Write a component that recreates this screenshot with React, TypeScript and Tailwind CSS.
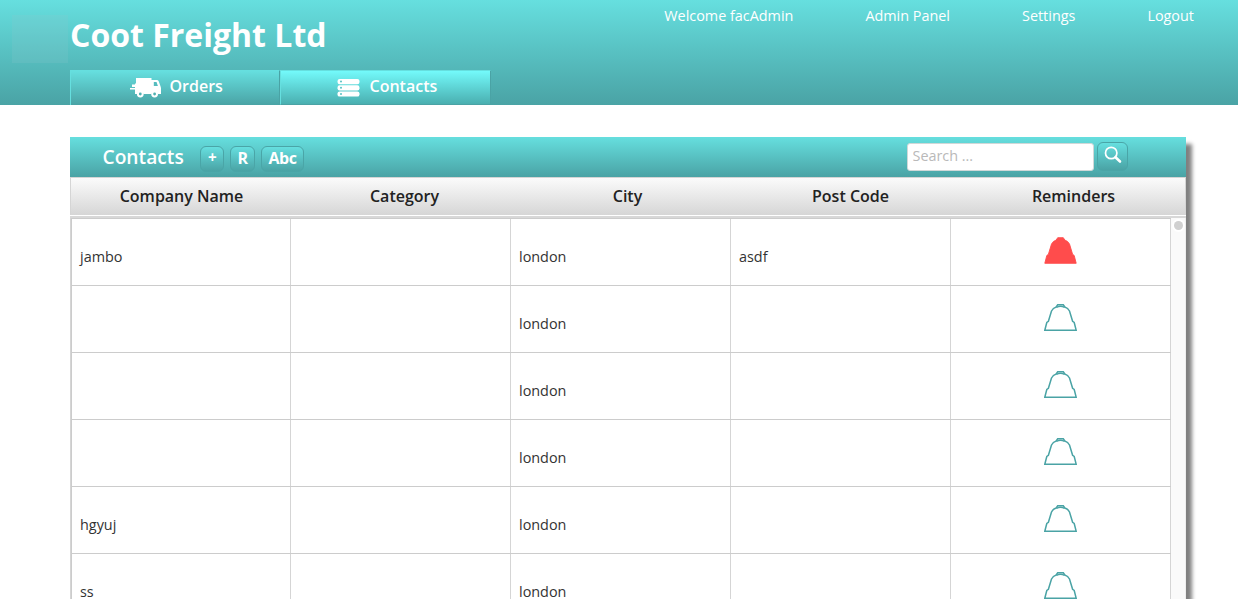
import React from "react";

const rows = [
  { name: "jambo", category: "", city: "london", post: "asdf", due: true },
  { name: "", category: "", city: "london", post: "", due: false },
  { name: "", category: "", city: "london", post: "", due: false },
  { name: "", category: "", city: "london", post: "", due: false },
  { name: "hgyuj", category: "", city: "london", post: "", due: false },
  { name: "ss", category: "", city: "london", post: "", due: false },
];

const columns = ["Company Name", "Category", "City", "Post Code", "Reminders"];

function Truck() {
  return (
    <svg width="31" height="20" viewBox="0 0 31 20" fill="none" className="shrink-0">
      <path
        fill="#fff"
        d="M6 0H21.500V2H27q1 0 1.600 1l2 5.500.4 1.500v6H28a4 4 0 0 0-6.800 0H13.700a4 4 0 0 0-6.800 0H5V11.500H0V10H5V9H2V6.500H5V5.500H6z"
      />
      <path fill="#56bcbe" d="M23.800 4h2.700l1.400 4h-4.100z" />
      <circle cx="10.300" cy="16" r="2.400" stroke="#fff" strokeWidth="2" fill="#50b0b1" />
      <circle cx="24.600" cy="16" r="2.400" stroke="#fff" strokeWidth="2" fill="#50b0b1" />
    </svg>
  );
}

function Stack() {
  return (
    <svg width="23" height="18" viewBox="0 0 23 18" className="shrink-0">
      {[0, 6.2, 12.4].map((y) => (
        <g key={y}>
          <rect x="0.500" y={y} width="22" height="5.200" rx="2.200" fill="#fff" />
          <circle cx="4" cy={y + 2.6} r="1" fill="#56c0c2" />
        </g>
      ))}
    </svg>
  );
}

function Bell({ due }: { due: boolean }) {
  return (
    <svg width="33" height="30" viewBox="0.5 0 33 30" className="block">
      <path
        d="M1.300 27.300 3.300 19.500 4.900 18.300 8 8Q9.500 5 12.700 4L14.200 1.700H19.800L21.300 4Q24.500 5 26 8L29.100 18.300 30.700 19.500 32.700 27.300Z"
        fill={due ? "#ff4c4c" : "#fff"}
        stroke={due ? "#ff4c4c" : "#4aa3a5"}
        strokeWidth={due ? 0.9 : 1.5}
      />
      {!due && <path d="M13 4.300Q17 2.300 21 4.300" fill="none" stroke="#4aa3a5" strokeWidth="1.500" />}
    </svg>
  );
}

const button =
  "box-border flex items-center justify-center rounded-[6px] border border-[#4aa5a7] bg-linear-to-b from-[#66dfdf] to-[#4aa3a5] text-white leading-none";

export default function App() {
  return (
    <div className="min-h-[599px] w-full bg-white font-['Open_Sans',sans-serif] text-[14.4px] text-[#333]">
      <header className="flex h-[105px] bg-linear-to-b from-[#66dfdf] to-[#4aa3a5] text-white">
        <div className="w-[70px] pt-[15px] pl-3">
          <div className="h-12 w-14 bg-[#8cc8cc]/20" />
        </div>
        <div className="flex w-[421px] flex-col justify-between">
          <h1 className="pt-[11px] text-[32px] leading-[48px] font-bold">Coot Freight Ltd</h1>
          <nav className="flex h-[35px] text-[16px] font-semibold">
            <a className="flex w-[210px] items-start border-t border-r border-l border-t-[#66dfdf] border-r-[#4aa3a5] border-l-[#66dfdf] bg-linear-to-b from-[#66dfdf] to-[#4aa3a5] pl-[59px]">
              <span className="pt-[7px]"><Truck /></span>
              <span className="ml-[8.5px] pt-[3px] leading-6">Orders</span>
            </a>
            <a className="flex w-[211px] items-start border border-t-[#66dfdf] border-r-[#4aa3a5] border-b-[#4aa3a5] border-l-[#66dfdf] bg-linear-to-b from-[#73fafb] to-[#4aafb0] pl-[56px]">
              <span className="pt-[8px]"><Stack /></span>
              <span className="ml-[9.5px] pt-[3px] leading-6">Contacts</span>
            </a>
          </nav>
        </div>
        <div className="flex flex-1 justify-end gap-[72px] pt-[5px] pr-[44px] leading-[21px]">
          <a>Welcome facAdmin</a>
          <a>Admin Panel</a>
          <a>Settings</a>
          <a>Logout</a>
        </div>
      </header>

      <div className="h-[494px] overflow-hidden pt-8 pl-[70px]">
        <main className="h-[600px] w-[1116px] bg-white shadow-[6px_7px_4px_#808080]">
          <div className="flex h-10 items-start bg-linear-to-b from-[#66dfdf] to-[#4aa3a5] pl-[32.500px] text-white">
            <h2 className="w-[97.500px] pt-[5px] text-[19.2px] leading-[30px] font-semibold">Contacts</h2>
            <div className="flex gap-[6px] pt-[9px] text-[16px] font-bold tracking-[-0.5px]">
              <button className={`${button} h-[26px] w-6 pb-[3px] text-[15.2px]`}>+</button>
              <button className={`${button} h-[26px] w-[25px] pb-[3px]`}>R</button>
              <button className={`${button} h-[26px] w-[43px] pb-[3px]`}>Abc</button>
            </div>
            <div className="mr-[58px] ml-auto flex gap-[3px] pt-[5px]">
              <input
                placeholder="Search ..."
                className="mt-px h-7 w-[187px] rounded-[3px] border border-[#d0d8d8] bg-white px-[4.5px] pb-[4px] text-[14.4px] text-[#333] placeholder:text-[#b9b9b9]"
              />
              <button className={`${button} h-[29px] w-[31px]`}>
                <svg width="18" height="18" viewBox="0 0 18 18" fill="none" stroke="#fff" className="mb-[3px]">
                  <circle cx="7.200" cy="7" r="5.700" strokeWidth="1.700" />
                  <path d="M11.500 11.200 16 15.500" strokeWidth="2.600" strokeLinecap="round" />
                </svg>
              </button>
            </div>
          </div>

          <div className="h-[38px] border-x border-t border-[#d5d5d5] bg-linear-to-b from-[#fbfbfb] to-[#d6d6d6]">
            <div className="-ml-px grid w-[1115px] grid-cols-5 text-center text-[16px] leading-9 font-semibold text-[#222]">
              {columns.map((c) => (
                <div key={c}>{c}</div>
              ))}
            </div>
          </div>
          <div className="h-[3px] border-t border-b-2 border-t-white border-b-[#d8d8d8]" />

          <div className="flex border-l border-[#d5d5d5]">
            <div className="w-[1100px] border-t border-l border-[#ccc]">
              {rows.map((r, i) => (
                <div key={i} className="grid h-[67px] grid-cols-[219px_220px_220px_220px_220px] border-b border-[#ccc]">
                  {[r.name, r.category, r.city, r.post].map((text, j) => (
                    <div key={j} className="border-r border-[#d5d5d5] pt-[27px] pl-2 leading-[21px]">
                      {text}
                    </div>
                  ))}
                  <div className="flex justify-center border-r border-[#d5d5d5] pt-[17px]">
                    <Bell due={r.due} />
                  </div>
                </div>
              ))}
            </div>
            <div className="w-[15px] border-r border-[#eee] bg-[#fafafa] pt-[3px] pl-[3.3px]">
              <div className="size-[9px] rounded-full bg-[#d0d0d0] ring-2 ring-white" />
            </div>
          </div>
        </main>
      </div>
    </div>
  );
}
